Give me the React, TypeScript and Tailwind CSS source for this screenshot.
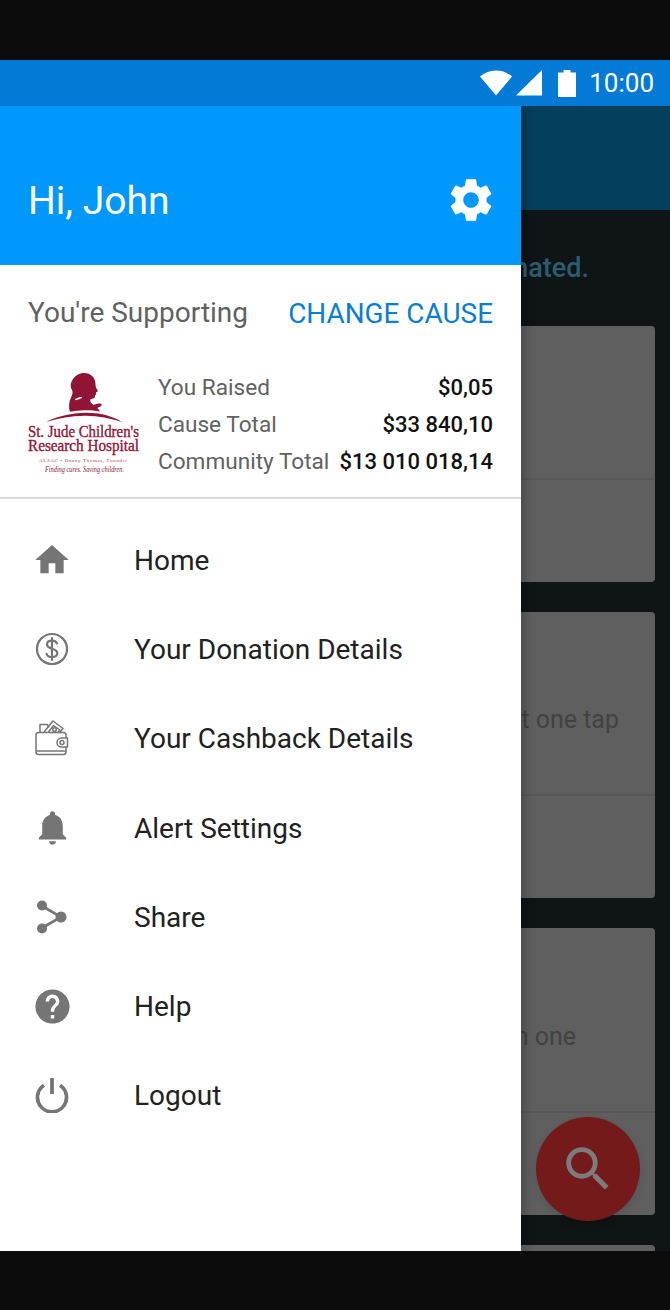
import React from "react";
import { MdHome, MdNotifications, MdHelp, MdSettings, MdSearch } from "react-icons/md";

const DollarIcon = () => (
  <svg width="34" height="34" viewBox="0 0 34 34" fill="none">
    <circle cx="17" cy="17" r="15" stroke="#757575" strokeWidth="2.2" />
    <path
      d="M22 11.500c-.8-1.800-2.600-2.800-5-2.800-2.900 0-5 1.500-5 3.900 0 5.200 10.300 3 10.300 8.500 0 2.500-2.200 4-5.200 4-2.700 0-4.700-1.200-5.500-3.300M17 6v22"
      stroke="#757575"
      strokeWidth="2.2"
      strokeLinecap="round"
    />
  </svg>
);

const WalletIcon = () => (
  <svg width="34" height="36" viewBox="0 0 34 36" fill="none" stroke="#757575" strokeWidth="1.5" strokeLinejoin="round">
    <rect x="1" y="12.500" width="30" height="22" rx="2.500" />
    <path d="M1.500 31h29" />
    <path d="M5 12V4.500h7.500l1 3" />
    <path d="M9 12l9-11 10 7.500L25 12" />
    <path d="M13.500 12l5-6.500 6.500 4.500L23 12" />
    <circle cx="19.500" cy="9.500" r="1.800" />
    <path d="M32.500 18h-6a4.500 4.500 0 0 0 0 9h6z" fill="#fff" />
    <circle cx="27" cy="22.500" r="2" />
  </svg>
);

const ShareIcon = () => (
  <svg width="32" height="34" viewBox="0 0 32 34" fill="#757575">
    <path d="M6 6l19 11L6 28" fill="none" stroke="#757575" strokeWidth="2.600" />
    <circle cx="6" cy="5.500" r="5" />
    <circle cx="25" cy="17" r="5.500" />
    <circle cx="6" cy="28.500" r="5" />
  </svg>
);

const PowerIcon = () => (
  <svg width="34" height="36" viewBox="0 0 34 36" fill="none" stroke="#757575">
    <path d="M17 1v16" strokeWidth="3.800" />
    <path d="M9 8.300a14.500 14.500 0 1 0 16 0" strokeWidth="3.600" />
  </svg>
);

const StJudeLogo = () => (
  <svg width="114" height="104" viewBox="0 0 114 104" fill="#8f1436" overflow="visible">
    <path d="M56 1c6.500 0 11.500 4.500 11.500 11 0 3 .8 4.500 2 6 .8 1.200-.2 2-1.500 2.200.4 1.500 0 2.800-1 3.400.4 1.500-.5 3-2.600 3.200-1.600.1-2.400.4-2.200 2 .3 1.600 1.600 3 3.400 4.200 2.700-1.200 5.500-1.800 7.300-1.200 1.300.5 1 1.900-.6 2.700l-3 1.500 3 3.500c-5.500-1-11-1.300-16-1.200-5.500.1-10 .6-14.500 1.500-1.300-4.500-1-10 1.300-14.500 1.500-3 2-5 .8-7.500C40 11 47 1 56 1z" />
    <path d="M18 50c12-6 26-9 39-9.200 14-.2 27 3 37 9.200-12-4-24-6.400-37-6.300C43 43.800 30 46 18 50z" />
    <path d="M47 27c3-1.500 6-2.500 7-1.800.5.500-2 2-6.500 3z" fill="#fff" />
    <text x="0" y="65" fontFamily="'Liberation Serif', serif" fontSize="16" textLength="111" lengthAdjust="spacingAndGlyphs" stroke="#8f1436" strokeWidth="0.35">St. Jude Children's</text>
    <text x="0" y="79" fontFamily="'Liberation Serif', serif" fontSize="16" textLength="111" lengthAdjust="spacingAndGlyphs" stroke="#8f1436" strokeWidth="0.35">Research Hospital</text>
    <text x="11" y="89.500" fontFamily="'Liberation Serif', serif" fontSize="5" textLength="88" lengthAdjust="spacing" opacity="0.85">ALSAC • Danny Thomas, Founder</text>
    <text x="17" y="100" fontFamily="'Liberation Serif', serif" fontSize="7.500" fontStyle="italic" textLength="79" lengthAdjust="spacingAndGlyphs">Finding cures. Saving children.</text>
  </svg>
);

const menuItems: { label: string; icon: React.ReactNode }[] = [
  { label: "Home", icon: <MdHome size={40} color="#757575" /> },
  { label: "Your Donation Details", icon: <DollarIcon /> },
  { label: "Your Cashback Details", icon: <WalletIcon /> },
  { label: "Alert Settings", icon: <MdNotifications size={41} color="#757575" /> },
  { label: "Share", icon: <ShareIcon /> },
  { label: "Help", icon: <MdHelp size={41} color="#757575" /> },
  { label: "Logout", icon: <PowerIcon /> },
];

const stats = [
  { label: "You Raised", value: "$0,05" },
  { label: "Cause Total", value: "$33 840,10" },
  { label: "Community Total", value: "$13 010 018,14" },
];

const BackgroundCard = ({ text, pad, height }: { text?: string; pad?: string; height: string }) => (
  <div className={`flex flex-col rounded-[4px] bg-[#5f5f5f] ${height}`}>
    <div className={`flex flex-1 items-center justify-end border-b-2 border-[#575757] text-[25px] text-[#424242] ${pad ?? ""}`}>
      {text}
    </div>
    <div className="h-[102px]" />
  </div>
);

const App = () => {
  return (
    <div className="flex h-[1310px] w-[670px] flex-col overflow-hidden bg-[#0c0c0c] font-['Roboto',sans-serif]">
      <div className="h-[60px] shrink-0" />

      {/* status bar */}
      <div className="flex h-[46px] shrink-0 items-center justify-end bg-[#027ad6] pr-[16px] text-white">
        <svg width="34" height="26" viewBox="0 0 34 26" fill="#fff" className="mr-[3px]">
          <path d="M1 6.500C5.500 2.500 11 .5 17 .5s11.500 2 16 6L17 25.500z" />
        </svg>
        <svg width="26" height="26" viewBox="0 0 26 26" fill="#fff" className="mr-[16px]">
          <path d="M0 25.500L26 0v25.500z" />
        </svg>
        <svg width="18" height="27" viewBox="0 0 18 27" fill="#fff" className="mr-[13px]">
          <path d="M5.500 0h7v2.500H18V27H0V2.500h5.500z" />
        </svg>
        <span className="text-[26px] leading-none">10:00</span>
      </div>

      <div className="relative h-[1145px] shrink-0 overflow-hidden bg-[#0f1417]">
        {/* page behind the drawer */}
        <div className="h-[104px] bg-[#053f5e]" />
        <div className="flex h-[116px] items-center justify-end pr-[81px] text-[27px] font-medium text-[#2c5d6e]">
          nated.
        </div>
        <div className="flex flex-col gap-[30px] px-[15px]">
          <BackgroundCard height="h-[256px]" />
          <BackgroundCard height="h-[286px]" text="Donate at one tap" pad="pr-[36px] pt-[34px]" />
          <BackgroundCard height="h-[287px]" text="Earn in one" pad="pr-[79px] pt-[34px]" />
          <BackgroundCard height="h-[287px]" />
        </div>

        {/* fab */}
        <div className="absolute left-[536px] top-[1011px] flex h-[104px] w-[104px] items-center justify-center rounded-full bg-[#741a1a] shadow-[0_3px_8px_rgba(0,0,0,0.12)]">
          <MdSearch size={58} color="#7c7c7c" />
        </div>

        {/* drawer */}
        <div className="absolute inset-y-0 left-0 flex w-[521px] flex-col bg-white shadow-[4px_0_10px_rgba(0,0,0,0.22)]">
          <div className="flex h-[159px] shrink-0 items-center justify-between bg-[#0098fa] pl-[28px] pr-[24px] pt-[31px] text-white">
            <span className="text-[39px] leading-none">Hi, John</span>
            <MdSettings size={52} color="#fff" className="mb-[2px]" />
          </div>

          <div className="flex h-[234px] shrink-0 flex-col border-b-2 border-[#dcdcdc] pl-[28px] pr-[28px]">
            <div className="flex h-[96px] shrink-0 items-center justify-between">
              <span className="text-[28px] text-[#616161]">You're Supporting</span>
              <span className="pt-[2px] text-[27.900px] text-[#0b7dd4]">CHANGE CAUSE</span>
            </div>
            <div className="flex items-start">
              <div className="w-[130px] shrink-0 pt-[11px]">
                <StJudeLogo />
              </div>
              <div className="flex flex-1 flex-col pt-[8px]">
                {stats.map((s) => (
                  <div key={s.label} className="flex h-[37px] items-center justify-between">
                    <span className="text-[22.600px] text-[#616161]">{s.label}</span>
                    <span className="text-[22px] font-medium text-[#111111]">{s.value}</span>
                  </div>
                ))}
              </div>
            </div>
          </div>

          <div className="flex flex-col pt-[16px]">
            {menuItems.map((item) => (
              <div key={item.label} className="flex h-[89.300px] items-center">
                <div className="flex w-[104px] shrink-0 items-center justify-center">{item.icon}</div>
                <span className="pl-[30px] pt-[2px] text-[28px] text-[#212121]">{item.label}</span>
              </div>
            ))}
          </div>
        </div>
      </div>

      <div className="flex-1 bg-[#0c0c0c]" />
    </div>
  );
};

export default App;
